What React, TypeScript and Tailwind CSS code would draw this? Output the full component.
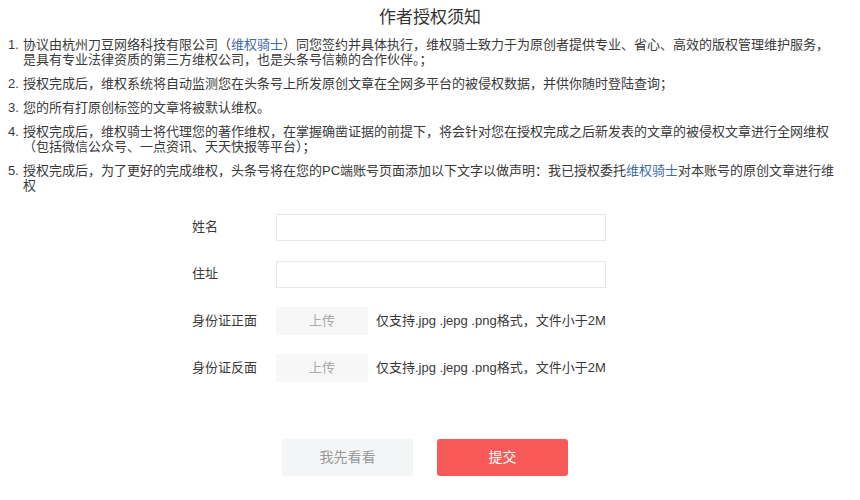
const font = { fontFamily: '"Liberation Sans", "Noto Sans CJK SC", sans-serif' };

const Link = ({ children }: { children: React.ReactNode }) => (
  <span className="text-[#406ba8]">{children}</span>
);

const items: React.ReactNode[] = [
  <>
    协议由杭州刀豆网络科技有限公司（<Link>维权骑士</Link>）同您签约并具体执行，维权骑士致力于为原创者提供专业、省心、高效的版权管理维护服务，是具有专业法律资质的第三方维权公司，也是头条号信赖的合作伙伴。；
  </>,
  <>授权完成后，维权系统将自动监测您在头条号上所发原创文章在全网多平台的被侵权数据，并供你随时登陆查询；</>,
  <>您的所有打原创标签的文章将被默认维权。</>,
  <>
    授权完成后，维权骑士将代理您的著作维权，在掌握确凿证据的前提下，将会针对您在授权完成之后新发表的文章的被侵权文章进行全网维权（包括微信公众号、一点资讯、天天快报等平台）；
  </>,
  <>
    授权完成后，为了更好的完成维权，头条号将在您的PC端账号页面添加以下文字以做声明：我已授权委托<Link>维权骑士</Link>对本账号的原创文章进行维权
  </>,
];

const Row = ({ label, children }: { label: string; children: React.ReactNode }) => (
  <div className="flex items-center h-[28px]">
    <div className="w-[84px] shrink-0 text-[13px] text-[#3a3a3a]">{label}</div>
    {children}
  </div>
);

const Upload = () => (
  <div className="flex items-center">
    <button className="w-[92px] h-[28px] bg-[#f7f7f7] text-[13px] text-[#aaa]">上传</button>
    <span className="ml-2 text-[13px] text-[#3a3a3a]">仅支持.jpg .jepg .png格式，文件小于2M</span>
  </div>
);

export default function App() {
  return (
    <div className="w-[860px] h-[500px] bg-white pt-[6px] overflow-hidden" style={font}>
      <h1 className="text-center text-[17px] leading-[24px] text-[#333]">作者授权须知</h1>

      {/* 须知条款 */}
      <ol className="mt-[7px] flex flex-col gap-[9px] text-[13px] leading-[15px] text-[#3a3a3a]">
        {items.map((item, i) => (
          <li key={i} className="flex">
            <span className="w-[15px] pl-[8px] box-content shrink-0">{i + 1}.</span>
            <span className="w-[818px]">{item}</span>
          </li>
        ))}
      </ol>

      {/* 表单 */}
      <div className="ml-[192px] mt-[20px] w-[414px] flex flex-col gap-[19px]">
        <Row label="姓名">
          <input className="w-[330px] h-[27px] border border-[#e8e8e8] outline-none px-2 text-[13px]" />
        </Row>
        <Row label="住址">
          <input className="w-[330px] h-[27px] border border-[#e8e8e8] outline-none px-2 text-[13px]" />
        </Row>
        <Row label="身份证正面">
          <Upload />
        </Row>
        <Row label="身份证反面">
          <Upload />
        </Row>
      </div>

      {/* 按钮 */}
      <div className="ml-[282px] mt-[57px] flex gap-[24px]">
        <button className="w-[131px] h-[37px] rounded-[3px] bg-[#f4f5f6] text-[14px] text-[#999]">我先看看</button>
        <button className="w-[131px] h-[37px] rounded-[3px] bg-[#f85959] text-[14px] text-white">提交</button>
      </div>
    </div>
  );
}
